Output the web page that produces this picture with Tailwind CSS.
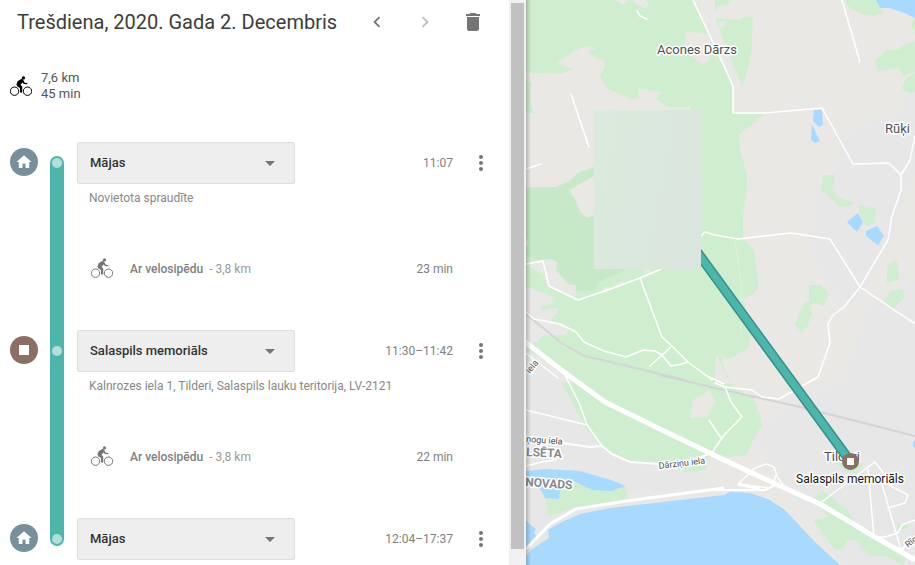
<!DOCTYPE html>
<html lang="lv">
<head>
<meta charset="utf-8">
<meta name="viewport" content="width=device-width, initial-scale=1">
<title>Laika skala</title>
<script src="https://cdn.jsdelivr.net/npm/@tailwindcss/browser@4"></script>
</head>
<body class="bg-white font-['Roboto','Noto_Sans',sans-serif] text-xs text-[#808080]">
<svg class="hidden" aria-hidden="true">
  <symbol id="bike" viewBox="0 0 22 22">
    <g fill="none" stroke="currentColor"><circle cx="4.500" cy="15.200" r="4.200"/><circle cx="17.500" cy="15.200" r="4.200"/></g>
    <circle cx="13.500" cy="1.900" r="1.600" fill="currentColor"/>
    <path d="M11.600 2.700 7.600 5.200 6.400 8.600 7.400 10.600 10 12V16.500h2.200v-6L10.600 9l1.800-2.400 1.600 1.500 3.300.2V6.900l-2.600-.2-1.700-3.200z" fill="currentColor"/>
  </symbol>
  <symbol id="home" viewBox="0 0 24 24"><path fill="currentColor" d="M10 20v-6h4v6h5v-8h3L12 3 2 12h3v8z"/></symbol>
  <symbol id="more" viewBox="0 0 24 24"><g fill="#757575"><circle cx="12" cy="6" r="2"/><circle cx="12" cy="12" r="2"/><circle cx="12" cy="18" r="2"/></g></symbol>
</svg>
<div class="grid h-screen grid-cols-[526fr_389fr] overflow-hidden">
  <div class="flex min-w-0 overflow-hidden">
    <main class="min-w-0 flex-1">
      <header class="flex h-11 items-center pr-3 pl-[17px]">
        <h1 class="flex-1 whitespace-nowrap text-[20px] leading-6 text-[#3c3c3c]">Trešdiena, 2020. Gada 2. Decembris</h1>
        <button class="flex h-11 w-12 items-center justify-center" aria-label="Iepriekšējā diena"><svg class="size-[22px]" viewBox="0 0 24 24"><path fill="#757575" d="M15.41 7.41 14 6l-6 6 6 6 1.41-1.41L10.83 12z"/></svg></button>
        <button class="flex h-11 w-12 items-center justify-center" aria-label="Nākamā diena" disabled><svg class="size-[22px]" viewBox="0 0 24 24"><path fill="#bdbdbd" d="M8.59 16.59 10 18l6-6-6-6-1.41 1.41L13.17 12z"/></svg></button>
        <button class="flex h-11 w-12 items-center justify-center" aria-label="Dzēst dienu"><svg class="size-6" viewBox="0 0 24 24"><path fill="#757575" d="M6 19c0 1.1.9 2 2 2h8c1.1 0 2-.9 2-2V7H6v12zM19 4h-3.500l-1-1h-5l-1 1H5v2h14V4z"/></svg></button>
      </header>
      <section class="mt-[26px] flex gap-[9px] pl-2.5 text-[13px] leading-4 text-[#555]">
        <svg class="mt-1.5 size-[22px] text-black"><use href="#bike"/></svg>
        <p>7,6 km<br>45 min</p>
      </section>
      <ol class="mt-10">
        <li class="flex pl-2.5">
          <span class="mt-1.5 flex size-7 shrink-0 items-center justify-center rounded-full bg-[#78909c] text-white"><svg class="size-[18px]"><use href="#home"/></svg></span>
          <span class="mt-3.5 ml-3 flex w-3.5 shrink-0 justify-center rounded-t-full bg-[#4db6ac] pt-0.5"><span class="size-2.5 rounded-full bg-[#b2dfdb]"></span></span>
          <div class="ml-[13px] min-w-0 flex-1">
            <div class="flex items-center pr-4">
              <div class="relative w-[218px]">
                <select aria-label="Vieta 1" class="h-[42px] w-full appearance-none rounded-xs border border-[#dedede] bg-[#eee] px-3 text-[13px] font-medium text-[#333]"><option>Mājas</option></select>
                <svg class="pointer-events-none absolute top-[9px] right-[13px] size-6" viewBox="0 0 24 24"><path fill="#757575" d="m7 10 5 5 5-5z"/></svg>
              </div>
              <time class="flex-1 text-right">11:07</time>
              <button class="ml-4" aria-label="Citas darbības"><svg class="size-6"><use href="#more"/></svg></button>
            </div>
            <p class="mt-0.5 pl-3 leading-6 text-[#888]">Novietota spraudīte</p>
            <div class="mt-8 mb-[34px] flex h-[54px] items-center pr-14 pl-3.5">
              <svg class="mr-[17px] size-[22px] text-[#757575]"><use href="#bike"/></svg>
              <span class="font-medium">Ar velosipēdu</span><span class="ml-1.5 text-[#999]">- 3,8 km</span>
              <span class="flex-1 text-right">23 min</span>
            </div>
          </div>
        </li>
        <li class="flex pl-2.5">
          <span class="mt-1.5 flex size-7 shrink-0 items-center justify-center rounded-full bg-[#8d6e63]"><span class="size-2.5 bg-white"></span></span>
          <span class="ml-3 flex w-3.5 shrink-0 justify-center bg-[#4db6ac] pt-4"><span class="size-2.5 rounded-full bg-[#b2dfdb]"></span></span>
          <div class="ml-[13px] min-w-0 flex-1">
            <div class="flex items-center pr-4">
              <div class="relative w-[218px]">
                <select aria-label="Vieta 2" class="h-[42px] w-full appearance-none rounded-xs border border-[#dedede] bg-[#eee] px-3 text-[13px] font-medium text-[#333]"><option>Salaspils memoriāls</option></select>
                <svg class="pointer-events-none absolute top-[9px] right-[13px] size-6" viewBox="0 0 24 24"><path fill="#757575" d="m7 10 5 5 5-5z"/></svg>
              </div>
              <time class="flex-1 text-right">11:30–11:42</time>
              <button class="ml-4" aria-label="Citas darbības"><svg class="size-6"><use href="#more"/></svg></button>
            </div>
            <p class="mt-0.5 pl-3 leading-6 text-[#888]">Kalnrozes iela 1, Tilderi, Salaspils lauku teritorija, LV-2121</p>
            <div class="mt-8 mb-[34px] flex h-[54px] items-center pr-14 pl-3.5">
              <svg class="mr-[17px] size-[22px] text-[#757575]"><use href="#bike"/></svg>
              <span class="font-medium">Ar velosipēdu</span><span class="ml-1.5 text-[#999]">- 3,8 km</span>
              <span class="flex-1 text-right">22 min</span>
            </div>
          </div>
        </li>
        <li class="flex items-start pl-2.5">
          <span class="mt-1.5 flex size-7 shrink-0 items-center justify-center rounded-full bg-[#78909c] text-white"><svg class="size-[18px]"><use href="#home"/></svg></span>
          <span class="ml-3 flex h-7 w-3.5 shrink-0 justify-center rounded-b-full bg-[#4db6ac] pt-4"><span class="size-2.5 rounded-full bg-[#b2dfdb]"></span></span>
          <div class="ml-[13px] min-w-0 flex-1">
            <div class="flex items-center pr-4">
              <div class="relative w-[218px]">
                <select aria-label="Vieta 3" class="h-[42px] w-full appearance-none rounded-xs border border-[#dedede] bg-[#eee] px-3 text-[13px] font-medium text-[#333]"><option>Mājas</option></select>
                <svg class="pointer-events-none absolute top-[9px] right-[13px] size-6" viewBox="0 0 24 24"><path fill="#757575" d="m7 10 5 5 5-5z"/></svg>
              </div>
              <time class="flex-1 text-right">12:04–17:37</time>
              <button class="ml-4" aria-label="Citas darbības"><svg class="size-6"><use href="#more"/></svg></button>
            </div>
          </div>
        </li>
      </ol>
    </main>
    <div class="flex w-[17px] shrink-0 flex-col bg-[#f1f1f1] px-0.5 pt-[3px] pb-4" aria-hidden="true"><div class="flex-1 bg-[#c1c1c1]"></div></div>
  </div>
  <div class="min-w-0 overflow-hidden bg-[#eae8e4]">
    <svg class="h-full w-full" viewBox="526 0 389 565" preserveAspectRatio="xMinYMin slice" role="img" aria-label="Maršruta karte">
      <defs>
        <linearGradient id="haze" x1="0" y1="0" x2="1" y2=".3"><stop offset="0" stop-color="#dcebdd"/><stop offset=".4" stop-color="#dae8dc"/><stop offset="1" stop-color="#dae6dd"/></linearGradient>
        <linearGradient id="edge"><stop offset="0" stop-color="#000" stop-opacity=".22"/><stop offset="1" stop-color="#000" stop-opacity="0"/></linearGradient>
      </defs>
      <path fill="#eae8e4" d="M526 0h389v565H526z"/>
      <!-- built-up areas -->
      <g fill="#e7e7e7">
        <path d="M915 93 903 97 895 118 878 116 855 128 835 138 842 150 830 180 815 190 809 245 820 275 843 307 860 297 872 275 889 240 900 210 915 175z"/>
        <path d="M870 300 915 278V565H842L822 540 812 520 750 440 765 422 812 392 843 380 855 340z"/>
        <path d="M526 350 570 375 600 446 640 462 690 465 708 472 715 488 626 492 570 510 548 535 526 555z"/>
      </g>
      <!-- woods -->
      <g fill="#ceeecf">
        <path d="M526 0H693L724 66 733 86V113L764 114 751 125 739 134 740 150 747 175 747 190 743 215V239L754 250 759 287 752 295 743 298 751 335 748 348 730 359 721 355 725 372 731 384 748 397 752 395 760 415 762 425 756 435 752 442 746 455 730 457 720 455 711 455 706 462V470L684 472 672 466 660 463 650 463 630 462 600 446 587 430 562 383 526 350V170L594 150V110H690V104L688 107 668 107 656 99 661 92 638 89 639 98 632 99 608 89 600 77 604 68 605 62 595 57 587 52 596 48 588 46 575 50 570 54 556 63 573 69 562 74 534 73 526 71z"/>
        <path d="M526 81 532 82 530 98 534 113H526zM715 18 740 20 744 17 753 16 752 45 749 64 742 87zM715 0H732L727 5 719 10 715 15zM844 0H876L883 13 873 16 861 14 850 8zM915 16 911 24 915 34zM915 41 906 44 897 50 887 50 875 61 878 71 898 68 903 76 915 72zM915 73 906 78 902 89 909 93 915 92zM823 175H835L832 190 840 198 855 203 848 207 839 206 830 197 821 190zM857 207 862 205 866 208 873 207 876 211 875 223 866 226 862 218zM887 267 890 262 896 261 898 264 899 279 887 283zM885 302 891 291 903 289 904 298 893 309zM809 285H821L829 294 824 306 814 303 810 306 812 315 808 320 810 323 802 333 795 325 803 304 809 302z"/>
        <path d="M545 498 555 497 570 481 582 485 595 480 612 482 625 486 628 500 578 507 548 516zM813 498 822 491 830 495 838 503 848 510 856 525 871 530 895 549 906 555 904 565 884 556 870 556 855 540 847 539 843 549 835 550 813 520 828 517zM832 460 843 455 854 456 862 465 857 473 845 471zM897 525 908 522V528L898 530zM715 375H727L731 384 715 386z"/>
      </g>
      <!-- open ground reaching in from the west -->
      <path fill="#eae8e4" d="M526 113H594V168L578 173 568 182 556 187 540 187 526 188z"/>
      <path fill="#c8e9c8" d="M526 188 540 187 556 187 568 182 578 173 594 167V269H628L600 281 594 290 578 291 568 283 556 272 557 262 548 259 540 260 526 255z"/>
      <!-- clearings -->
      <g fill="#eae8e4">
        <path d="M569 190 594 176V215L588 218 580 212 577 203zM616 0 623 5 629 0zM632 0 636 4 645 8 650 3 645 0zM526 238A4 5 0 0 1 526 247zM693 0H704L742 86 733 86 724 66zM686 31 708 34 712 45 710 60 702 64 684 50zM715 18 724 11V5L718 6 714 14zM718 23 724 21 726 25 721 29zM693 400 709 390 716 401 707 417 690 418zM716 353 724 372 731 384 715 384z"/>
        <path fill="#e8e8e6" d="M526 264 540 260 550 259 557 262 556 270 568 284 576 285 576 297 570 297 548 287 543 275zM526 286 553 297 552 304 540 306 542 310 557 308 558 312 550 320 568 328 567 335 545 335 526 350zM602 289 608 286 610 289 603 293zM615 285 623 281 625 284 617 288zM644 271 649 268 650 272 645 274zM526 350 545 360 575 382 562 383z"/>
      </g>
      <g fill="#a8daff">
        <path d="M876 0H915V18L902 12 889 8 880 8zM814 110H822L823 125 819 127 813 121zM812 125 820 141 815 143 811 140zM847 222 858 213 863 222 857 232zM866 231 877 226 884 236 878 245 866 236zM915 440 913 443V447L915 448z"/>
        <path d="M526 471 545 469 580 471 611 480 626 486 617 489 612 491 592 490 582 485 573 481 565 489 560 491 559 499 545 498 541 490 526 480z"/>
        <path d="M526 521 536 529 534 533 537 537 526 548zM526 565V556L532 549 549 538 548 530 562 522 580 514 610 508 724 495 730 492 750 493 768 499 785 510 800 526 815 542 840 565z"/>
      </g>
      <!-- railway -->
      <path d="M526 314 560 342 585 356 640 369 684 380" fill="none" stroke="#d3d6d6" stroke-width="2"/>
      <path d="M660 375 715 388 800 407 860 422 915 436" fill="none" stroke="#d3d4d8" stroke-width="2"/>
      <!-- minor roads -->
      <g fill="none" stroke="#fff" stroke-width="1.500" stroke-linejoin="round" stroke-linecap="round">
        <path d="M693 0 724 66 733 86V113L765 113 822 108 853 164 889 163 901 175 910 160 915 136M901 175V190L892 216 888 240 860 287 844 307 833 315 828 324 830 343 818 377 795 390 779 399 762 397 752 390 725 387 715 383"/>
        <path d="M842 0 860 62M701 236 705 232 715 235 738 239 791 233 830 239 860 287 915 324M637 11 640 16 647 19M571 94 589 147M526 169 541 164M526 264 543 261 549 286 578 300 605 291 640 278 661 269M640 278 662 337 672 346 688 362 712 380M672 346 650 366M526 312 534 319 560 324 576 332 584 342 604 351 626 357 643 350 655 351 662 355 671 366 682 364 688 362M565 375 580 405 587 425 602 446M526 410 587 425M526 466 542 462 556 460M526 353 558 378M725 387 731 402 742 417 725 434 715 448 711 455M709 420 721 438M819 504 875 462 882 471 889 485 908 495 905 503 888 508M705 375 724 384"/>
        <path d="M868 470 874 537M879 474 901 550M874 537 885 537 898 533 902 525 915 520M738 484 755 468 766 464 774 467 778 478 785 487M776 475 772 487 765 490M738 484 770 488"/>
      </g>
      <!-- main roads -->
      <g fill="none" stroke="#fff" stroke-width="3" stroke-linejoin="round">
        <path stroke-width="5" d="M520 338 568 375 605 402 660 429 720 458 778 485 820 504 875 537 915 560"/>
        <path stroke-width="2" d="M526 441 562 443 590 447 602 446 612 454 630 462 660 464 692 461 711 453"/>
        <path d="M526 549 550 524 576 509 626 501 724 488M738 484 760 489"/>
        <path stroke-width="2" d="M715 490 765 490 775 485M900 552 906 545 915 540"/>
      </g>
      <path fill="none" stroke="#dff1df" d="M735 240 741 280 741 335"/>
      <!-- place names -->
      <g fill="#4c5158" stroke="#fff" stroke-width="3" stroke-linejoin="round" paint-order="stroke" font-size="13">
        <text x="697" y="54" text-anchor="middle">Acones Dārzs</text>
        <text x="885" y="133">Rūķi</text>
        <text x="824" y="461">Tilderi</text>
        <g font-size="9">
          <text x="526" y="442" transform="rotate(4 526 442)">ņogu iela</text>
          <text x="659" y="469" transform="rotate(-7 659 469)">Dārziņu iela</text>
          <text x="530" y="374" transform="rotate(-52 530 374)">iela</text>
          <text x="908" y="548" transform="rotate(-38 908 548)">Rīg</text>
        </g>
        <g font-size="12" font-weight="700" fill="#85898d">
          <text x="526" y="456" transform="rotate(3 526 456)">LSĒTA</text>
          <text x="525" y="486" transform="rotate(4 525 486)">NOVADS</text>
        </g>
      </g>
      <!-- route -->
      <path d="M692 245 850 461" stroke="#36918a" stroke-width="10"/>
      <path d="M692 245 850 461" stroke="#4db6ac" stroke-width="7"/>
      <path fill="url(#haze)" d="M594 110H701V269H594z"/>
      <circle cx="850.500" cy="461.500" r="8.500" fill="#8d6e63"/>
      <path fill="#fff" d="M847 458h7v7h-7z"/>
      <text x="850" y="483" text-anchor="middle" font-size="12" fill="#111" stroke="#fff" stroke-width="3" stroke-linejoin="round" paint-order="stroke">Salaspils memoriāls</text>
      <path fill="url(#edge)" d="M526 0h5v565h-5z"/>
    </svg>
  </div>
</div>
</body>
</html>
